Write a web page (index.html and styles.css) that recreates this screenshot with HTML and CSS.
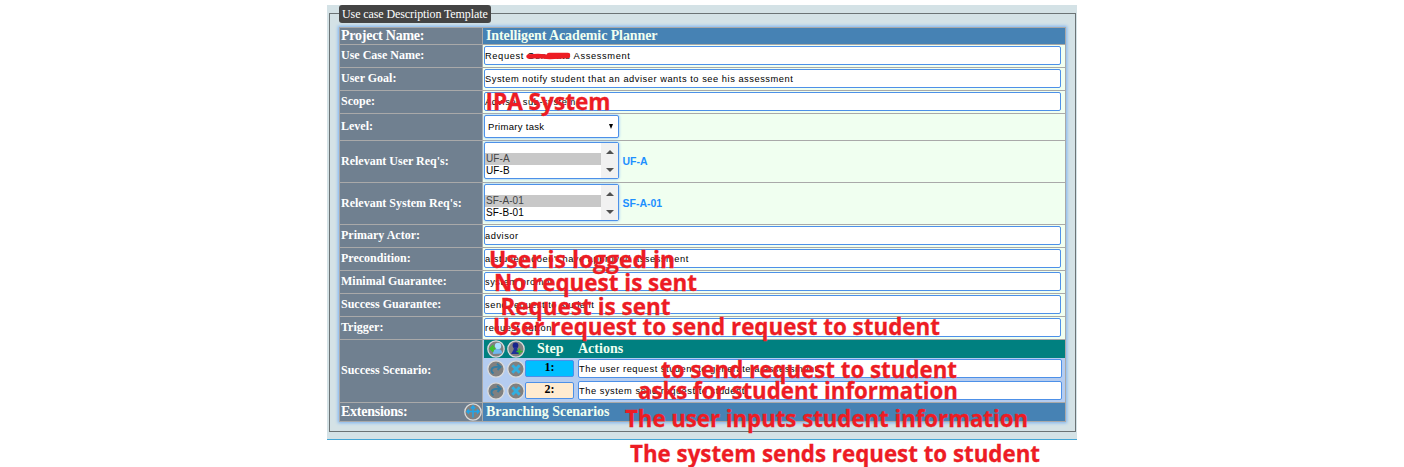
FILE: index.html
```html
<!DOCTYPE html>
<html lang="en">
<head>
<meta charset="utf-8">
<title>Use case Description Template</title>
<link rel="stylesheet" href="styles.css">
</head>
<body>
<main class="panel">
  <section class="frame">
    <h1 class="legend">Use case Description Template</h1>
    <div class="sheet">
      <div class="label big">Project Name:</div><div class="title">Intelligent Academic Planner</div>
      <div class="label">Use Case Name:</div><div class="cell"><div class="field wide">Request Generate Assessment</div></div>
      <div class="label">User Goal:</div><div class="cell"><div class="field">System notify student that an adviser wants to see his assessment</div></div>
      <div class="label">Scope:</div><div class="cell"><div class="field">Adviser sub-system</div></div>
      <div class="label">Level:</div><div class="cell"><div class="select"><span>Primary task</span><i class="caret"></i></div></div>
      <div class="label mid">Relevant User Req's:</div>
      <div class="cell">
        <div class="list"><div class="options"><div></div><div class="on">UF-A</div><div>UF-B</div></div><div class="scroll"><i class="up"></i><i class="down"></i></div></div>
        <span class="chosen">UF-A</span>
      </div>
      <div class="label mid">Relevant System Req's:</div>
      <div class="cell">
        <div class="list"><div class="options"><div></div><div class="on">SF-A-01</div><div>SF-B-01</div></div><div class="scroll"><i class="up"></i><i class="down"></i></div></div>
        <span class="chosen">SF-A-01</span>
      </div>
      <div class="label">Primary Actor:</div><div class="cell"><div class="field">advisor</div></div>
      <div class="label">Precondition:</div><div class="cell"><div class="field">a student doen't have approved assessment</div></div>
      <div class="label">Minimal Guarantee:</div><div class="cell"><div class="field">system prompt</div></div>
      <div class="label">Success Guarantee:</div><div class="cell"><div class="field">send request to student</div></div>
      <div class="label">Trigger:</div><div class="cell"><div class="field">request button</div></div>
      <div class="label">Success Scenario:</div>
      <div class="cell scenario">
        <div class="steps-head">
          <svg class="icon" viewBox="0 0 18 18"><circle class="disc" cx="9" cy="9" r="8.200"/><circle cx="11" cy="6" r="3.200" fill="#a8e2ff"/><path d="M6 14Q6 8.500 10.500 9Q15.500 9 15 13.500Z" fill="#70b8ef"/><path d="M8.500 8.500H3.500M6.500 5.500L3.500 8.500L6.500 11.500" stroke="#39c42b" stroke-width="2" fill="none"/></svg>
          <svg class="icon" viewBox="0 0 18 18"><circle class="disc" cx="9" cy="9" r="8.200"/><circle cx="8.500" cy="5.500" r="2.900" fill="#17258b"/><path d="M7 7H10L10.500 10L12.500 14H4L6.500 10Z" fill="#203098"/><path d="M12.500 8.500V14.500M9.500 11.500H15.500" stroke="#35b929" stroke-width="1.700"/></svg>
          <b class="h-step">Step</b><b>Actions</b>
        </div>
        <div class="step">
          <svg class="icon" viewBox="0 0 18 18"><circle class="disc" cx="9" cy="9" r="8.200"/><path d="M6.500 13.500Q3 11 5.500 8Q7 6.500 12.500 6.800M10 3.800L13.500 6.800L10.500 10" class="arrow"/></svg>
          <svg class="icon" viewBox="0 0 18 18"><circle class="disc" cx="9" cy="9" r="8.200"/><path d="M5.300 5.300L12.700 12.700M12.700 5.300L5.300 12.700" class="cross"/></svg>
          <div class="num first">1:</div><div class="field">The user request student to generate a assessment</div>
        </div>
        <div class="step">
          <svg class="icon" viewBox="0 0 18 18"><circle class="disc" cx="9" cy="9" r="8.200"/><path d="M6.500 13.500Q3 11 5.500 8Q7 6.500 12.500 6.800M10 3.800L13.500 6.800L10.500 10" class="arrow"/></svg>
          <svg class="icon" viewBox="0 0 18 18"><circle class="disc" cx="9" cy="9" r="8.200"/><path d="M5.300 5.300L12.700 12.700M12.700 5.300L5.300 12.700" class="cross"/></svg>
          <div class="num">2:</div><div class="field">The system send request to student</div>
        </div>
      </div>
      <div class="label big ext"><span>Extensions:</span>
        <svg class="icon" viewBox="0 0 18 18"><circle class="disc" cx="9" cy="9" r="8.200"/><path d="M9 14.500V4M3.500 8.500H14.500M7 5.500L9 3L11 5.500M5 6.500L3 8.500L5 10.500M13 6.500L15 8.500L13 10.500" stroke="#20a4e8" stroke-width="1.500" fill="none"/></svg>
      </div>
      <div class="title low">Branching Scenarios</div>
    </div>
  </section>
</main>
<svg class="notes" viewBox="0 0 1404 467">
  <path d="M528.500 56.500L538 56L550 57L568 56M549 55H568" class="strike"/>
  <text x="485.500" y="110" textLength="125" lengthAdjust="spacingAndGlyphs">IPA System</text>
  <text x="489" y="268" textLength="186" lengthAdjust="spacingAndGlyphs">User is logged in</text>
  <text x="494" y="291" textLength="203" lengthAdjust="spacingAndGlyphs">No request is sent</text>
  <text x="500.500" y="314.500" textLength="170" lengthAdjust="spacingAndGlyphs">Request is sent</text>
  <text x="493" y="334.500" textLength="447" lengthAdjust="spacingAndGlyphs">User request to send request to student</text>
  <text x="661" y="378" textLength="296" lengthAdjust="spacingAndGlyphs">to send request to student</text>
  <text x="638" y="399" textLength="320" lengthAdjust="spacingAndGlyphs">asks for student information</text>
  <text x="625" y="427" textLength="403" lengthAdjust="spacingAndGlyphs">The user inputs student information</text>
  <text x="630" y="462" textLength="410" lengthAdjust="spacingAndGlyphs">The system sends request to student</text>
</svg>
</body>
</html>
```
FILE: styles.css
```css
* { box-sizing: border-box; }
body { margin: 0; height: 467px; overflow: hidden; background: #fff; position: relative; font-family: "Liberation Serif", serif; }
.panel { width: 750px; height: 435px; margin: 5px 0 0 327px; padding: 8px 1px 7px 2px; background: #d4e2e6; border-bottom: 1px solid #45a6d5; display: flow-root; }
.frame { height: 419px; border: 1px solid #6b7375; padding: 0 0 0 9px; }
.legend { width: 152px; height: 18px; margin: -9px 0 0; padding-left: 3px; border-radius: 3px; background: #444; color: #fff; font-size: 12px; line-height: 18px; letter-spacing: -.1px; font-weight: normal; white-space: nowrap; }
.sheet { margin-top: 4px; width: 727px; display: grid; grid-template-columns: 142px 582px; grid-template-rows: 16px 22px 22px 22px 26px 41px 41px 22px 22px 22px 22px 22px 62px 18px; gap: 1px; padding: 1px; background: #a9a9a9; box-shadow: 0 0 3px 1px #7db4f2; }
.label { background: #708090; color: #fff; font-weight: bold; font-size: 12px; display: flex; align-items: center; padding: 0 0 2px 1px; white-space: nowrap; }
.mid { padding-bottom: 0; }
.big { font-size: 14px; letter-spacing: -.25px; padding-bottom: 0; }
.title { background: #4682b4; color: #f0fff0; font-size: 14px; font-weight: bold; line-height: 16px; letter-spacing: -.1px; padding-left: 3px; }
.low { line-height: 18px; letter-spacing: -.03px; }
.cell { background: #f0fff0; padding: 1px; display: flex; align-items: flex-start; }
.field { width: 577px; height: 19px; border: 1px solid #4d90e8; border-radius: 2px; background: #fff; color: #000; font: 9.300px/18px "Liberation Sans", sans-serif; letter-spacing: .53px; white-space: nowrap; }
.wide { letter-spacing: .62px; }
.select { width: 135px; height: 23px; border: 1px solid #4d90e8; border-radius: 2px; background: #fff; display: flex; justify-content: space-between; align-items: center; padding: 0 5px 0 3px; font: 9.500px "Liberation Sans", sans-serif; letter-spacing: .3px; box-shadow: 0 0 3px #80b8f8; }
.caret { border: 2.5px solid transparent; border-top: 5px solid #000; border-bottom: 0; }
.list { width: 135px; height: 37px; border: 1px solid #4d90e8; border-radius: 2px; background: #fff; display: flex; box-shadow: 0 0 3px #80b8f8; font: 10px/12px "Liberation Sans", sans-serif; letter-spacing: .1px; }
.options { width: 116px; }
.options div { height: 12px; padding-left: 1px; }
.options div:first-child { height: 10px; }
.options .on { background: #c8c8c8; color: #444; }
.scroll { width: 17px; background: #f1f1f1; display: flex; flex-direction: column; justify-content: space-between; align-items: center; padding: 7px 0 6px; }
.up { border: 4px solid transparent; border-top: 0; border-bottom-color: #505050; }
.down { border: 4px solid transparent; border-bottom: 0; border-top-color: #505050; }
.chosen { align-self: center; margin: 0 0 2px 3.5px; color: #1e90ff; font: bold 10.500px "Liberation Sans", sans-serif; }
.scenario { flex-direction: column; padding: 0 0 0 1px; background: #b4ccf0; }
.steps-head { width: 581px; height: 18px; background: #008080; color: #f0fff0; display: flex; align-items: center; padding-left: 3px; gap: 2px; font-size: 14px; }
.h-step { width: 39px; margin: 0 0 0 10px; }
.step { display: flex; align-items: flex-start; height: 22px; padding: 1px 0 0 3px; }
.step .icon { margin: 1px 2px 0 0; }
.step .field { width: 484px; margin-left: 4px; }
.num { width: 49px; height: 17px; margin: 1px 0 0 -2px; border: 1px solid #4d90e8; border-radius: 2px; background: #ffebd0; text-align: center; font-weight: bold; font-size: 12px; line-height: 12px; }
.first { background: #00bfff; }
.icon { width: 18px; height: 18px; flex: none; display: block; }
.disc { fill: #808080; stroke: #dcdcdc; stroke-width: 1.3; }
.arrow { fill: none; stroke: #347da3; stroke-width: 2; }
.cross { fill: none; stroke: #32afe0; stroke-width: 2.8; }
.ext { justify-content: space-between; }
.notes { position: absolute; left: 0; top: 0; width: 1404px; height: 467px; font: bold 23.500px "Open Sans", sans-serif; fill: #ed1c24; }
.notes text { stroke: #ed1c24; stroke-width: .3; }
.strike { fill: none; stroke: #ed1c24; stroke-width: 4.5; stroke-linecap: round; stroke-linejoin: round; }
```
